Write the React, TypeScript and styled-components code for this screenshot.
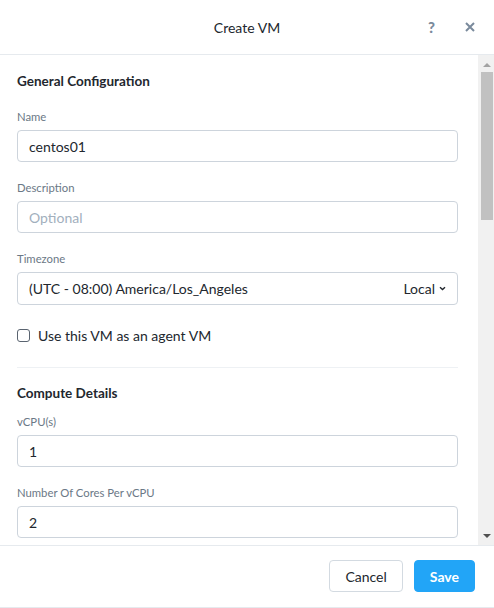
import React from "react"
import styled, { createGlobalStyle } from "styled-components"

const Global = createGlobalStyle`
	html, body {
		margin: 0;
		padding: 0;
		background: #ffffff;
	}
	body {
		font-family: Lato, "Open Sans", sans-serif;
		color: #22272e;
	}
	* {
		box-sizing: border-box;
	}
`

const Modal = styled.div`
	width: 494px;
	height: 608px;
	display: flex;
	flex-direction: column;
	background: #fff;
	border-bottom: 1px solid #e6eaee;
`

const Header = styled.div`
	height: 55px;
	flex: 0 0 55px;
	display: flex;
	align-items: center;
	justify-content: center;
	position: relative;
	border-bottom: 1px solid #e6eaee;
`

const Title = styled.div`
	font-size: 14px;
	color: #22272e;
`

const HeaderActions = styled.div`
	position: absolute;
	right: 19px;
	top: 0;
	height: 100%;
	display: flex;
	align-items: center;
	gap: 30px;
`

const IconButton = styled.div`
	color: #7a8a9c;
	font-size: 15px;
	font-weight: 900;
	display: flex;
	align-items: center;
`

const BodyRow = styled.div`
	flex: 1;
	display: flex;
	min-height: 0;
`

const Content = styled.div`
	flex: 1;
	overflow: hidden;
	padding: 17px 20px 0 17px;
`

const ScrollTrack = styled.div`
	width: 16px;
	flex: 0 0 16px;
	background: #f1f1f1;
	display: flex;
	flex-direction: column;
	align-items: center;
	padding: 0 1px 0 3px;
`

const Arrow = styled.div<{ $down?: boolean; $active?: boolean }>`
	width: 0;
	height: 0;
	border-left: 4px solid transparent;
	border-right: 4px solid transparent;
	${(p) =>
		p.$down
			? `border-top: 4px solid ${p.$active ? "#505050" : "#a3a3a3"};`
			: `border-bottom: 4px solid ${p.$active ? "#505050" : "#a3a3a3"};`}
	margin: ${(p) => (p.$down ? "auto 0 7px" : "8px 0 5px")};
`

const Thumb = styled.div`
	width: 12px;
	height: 148px;
	background: #c1c1c1;
`

const SectionTitle = styled.div<{ $gap: number }>`
	font-size: 13.5px;
	font-weight: 700;
	color: #22272e;
	margin: 1px 0 ${(p) => p.$gap}px;
`

const Field = styled.div`
	margin-bottom: 19px;
`

const Label = styled.div`
	font-size: 11.3px;
	color: #6b7886;
	margin-bottom: 7px;
`

const InputBox = styled.div<{ $placeholder?: boolean; $tall?: boolean }>`
	height: ${(p) => (p.$tall ? "33px" : "32px")};
	border: 1px solid #cdd4dc;
	border-radius: 4px;
	display: flex;
	align-items: center;
	justify-content: space-between;
	padding: 0 11px;
	font-size: 14px;
	color: ${(p) => (p.$placeholder ? "#a2afbd" : "#22272e")};
`

const Select = styled.span`
	display: flex;
	align-items: center;
	gap: 4px;
`

const CheckRow = styled.label`
	display: flex;
	align-items: center;
	gap: 8px;
	font-size: 14px;
	margin: 22px 0 23px;
`

const Box = styled.span`
	width: 13px;
	height: 13px;
	border: 1px solid #5a6470;
	border-radius: 3px;
`

const Divider = styled.div`
	height: 1px;
	background: #eef1f4;
	margin-bottom: 17px;
`

const Footer = styled.div`
	flex: 0 0 62px;
	border-top: 1px solid #e6eaee;
	display: flex;
	align-items: center;
	justify-content: flex-end;
	gap: 11px;
	padding: 0 19px 1px 0;
`

const Button = styled.button<{ $primary?: boolean }>`
	height: 32px;
	padding: 0 15px;
	border-radius: 4px;
	font-family: inherit;
	font-size: 14px;
	font-weight: ${(p) => (p.$primary ? 700 : 400)};
	border: 1px solid ${(p) => (p.$primary ? "#22a5f7" : "#d3dae1")};
	background: ${(p) => (p.$primary ? "#22a5f7" : "#fff")};
	color: ${(p) => (p.$primary ? "#fff" : "#22272e")};
`

const Chevron = () => (
	<svg width="7" height="5" viewBox="0 0 7 5">
		<path d="M1 1.2 L3.5 3.6 L6 1.2" stroke="#22272e" strokeWidth="1.4" fill="none" />
	</svg>
)

const App = () => {
	return (
		<>
			<Global />
			<Modal>
				<Header>
					<Title>Create VM</Title>
					<HeaderActions>
						<IconButton>?</IconButton>
						<IconButton>
							<svg width="10" height="10" viewBox="0 0 10 10">
								<path d="M1 1 L9 9 M9 1 L1 9" stroke="#7a8a9c" strokeWidth="2" />
							</svg>
						</IconButton>
					</HeaderActions>
				</Header>
				<BodyRow>
					<Content>
						<SectionTitle $gap={21}>General Configuration</SectionTitle>
						<Field>
							<Label>Name</Label>
							<InputBox>centos01</InputBox>
						</Field>
						<Field>
							<Label>Description</Label>
							<InputBox $placeholder>Optional</InputBox>
						</Field>
						<Field>
							<Label>Timezone</Label>
							<InputBox $tall>
								<span>(UTC - 08:00) America/Los_Angeles</span>
								<Select>
									Local <Chevron />
								</Select>
							</InputBox>
						</Field>
						<CheckRow>
							<Box />
							Use this VM as an agent VM
						</CheckRow>
						<Divider />
						<SectionTitle $gap={14}>Compute Details</SectionTitle>
						<Field>
							<Label>vCPU(s)</Label>
							<InputBox>1</InputBox>
						</Field>
						<Field>
							<Label>Number Of Cores Per vCPU</Label>
							<InputBox>2</InputBox>
						</Field>
					</Content>
					<ScrollTrack>
						<Arrow />
						<Thumb />
						<Arrow $down $active />
					</ScrollTrack>
				</BodyRow>
				<Footer>
					<Button>Cancel</Button>
					<Button $primary>Save</Button>
				</Footer>
			</Modal>
		</>
	)
}

export default App
